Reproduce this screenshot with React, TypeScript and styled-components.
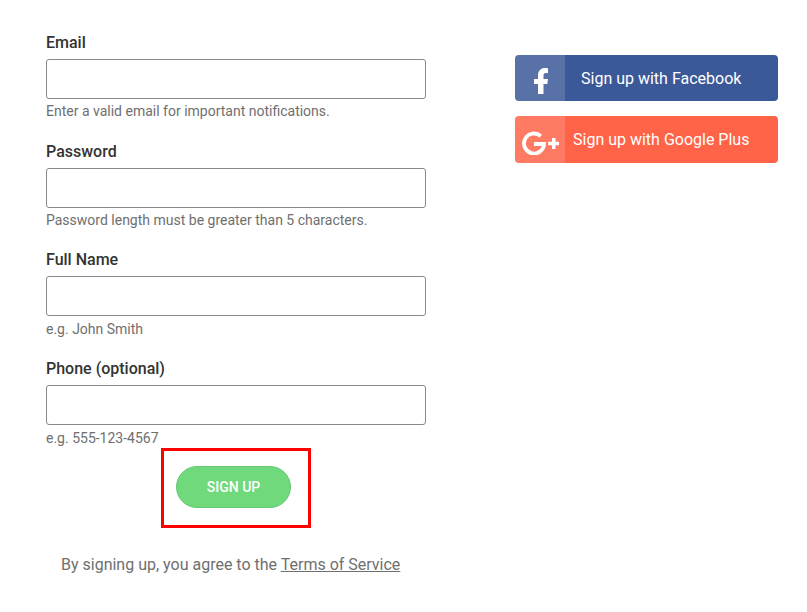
import React from "react";
import styled, { createGlobalStyle } from "styled-components";

const Global = createGlobalStyle`
  html, body { margin: 0; padding: 0; background: #fff; }
  body {
    font-family: Roboto, "Liberation Sans", sans-serif;
    overflow: hidden;
  }
`;

const Page = styled.div`
  display: flex;
  align-items: flex-start;
  width: 807px;
  height: 612px;
  padding: 32px 0 0 46px;
  box-sizing: border-box;
`;

const FormColumn = styled.form`
  display: flex;
  flex-direction: column;
  width: 380px;
  flex: none;
`;

const Field = styled.div`
  display: flex;
  flex-direction: column;
  height: 108.7px;
`;

const Label = styled.label`
  font-size: 16px;
  font-weight: 500;
  line-height: 20px;
  color: #333;
  padding-top: 1px;
  margin-bottom: 6px;
`;

const Input = styled.input`
  display: block;
  width: 100%;
  height: 40px;
  box-sizing: border-box;
  border: 1px solid #888;
  border-radius: 3px;
  background: #fff;
  outline: none;
`;

const Hint = styled.span`
  font-size: 14px;
  line-height: 20px;
  color: #6f6f6f;
  margin-top: 2.45px;
`;

const Highlight = styled.div`
  align-self: flex-start;
  margin: -18.8px 0 0 115px;
  width: 150px;
  height: 80px;
  box-sizing: border-box;
  border: 3px solid #f00;
  padding: 15px 0 0 12px;
`;

const SubmitButton = styled.button`
  display: block;
  width: 115px;
  height: 42px;
  border: 1px solid #66c975;
  border-radius: 21px;
  background: #6fd97c;
  color: #fff;
  font-family: inherit;
  font-size: 14px;
  font-weight: 500;
  padding: 0;
`;

const Terms = styled.p`
  margin: 27px 0 0 15px;
  font-size: 16px;
  line-height: 20px;
  color: #6f6f6f;
`;

const TermsLink = styled.a`
  color: #6f6f6f;
  text-decoration: underline;
`;

const SocialColumn = styled.div`
  display: flex;
  flex-direction: column;
  gap: 15px;
  width: 263px;
  margin: 23px 0 0 89px;
  flex: none;
`;

const SocialButton = styled.a<{ $bg: string; $h: number }>`
  display: flex;
  align-items: center;
  height: ${(p) => p.$h}px;
  background: ${(p) => p.$bg};
  border-radius: 4px;
  overflow: hidden;
  color: #fff;
`;

const SocialIcon = styled.span<{ $top: number }>`
  display: flex;
  align-items: center;
  justify-content: center;
  width: 50px;
  height: 100%;
  box-sizing: border-box;
  padding: ${(p) => p.$top}px 0 0 2px;
  flex: none;
  background: rgba(255, 255, 255, 0.15);
`;

const SocialLabel = styled.span<{ $left: number; $top: number }>`
  font-size: 16px;
  line-height: 20px;
  margin-left: ${(p) => p.$left}px;
  padding-top: ${(p) => p.$top}px;
`;

const FacebookGlyph = () => (
  <svg width="14" height="26" viewBox="0 0 14 26" fill="#fff">
    <path d="M4 26V16H0v-5h4V7.500C4 2.500 7 0 11 0c1.300 0 2.500.1 3 .2v4.800h-2c-2 0-2.500 1-2.500 2.500V11H14l-.7 5H9.500v10z" />
  </svg>
);

const GooglePlusGlyph = () => (
  <svg width="38" height="24" viewBox="0 0 38 24">
    <path d="M18.800 5.200A10 10 0 1 0 22 13H12" fill="none" stroke="#fff" strokeWidth="3.800" />
    <path d="M30 7h3.500v3.800h3.500v3.400h-3.500V18H30v-3.800h-3.800v-3.400H30z" fill="#fff" />
  </svg>
);

const fields = [
  { label: "Email", hint: "Enter a valid email for important notifications." },
  { label: "Password", hint: "Password length must be greater than 5 characters." },
  { label: "Full Name", hint: "e.g. John Smith" },
  { label: "Phone (optional)", hint: "e.g. 555-123-4567" },
];

export default function App() {
  return (
    <>
      <Global />
      <Page>
        <FormColumn>
          {fields.map((f) => (
            <Field key={f.label}>
              <Label>{f.label}</Label>
              <Input />
              <Hint>{f.hint}</Hint>
            </Field>
          ))}
          <Highlight>
            <SubmitButton type="button">SIGN UP</SubmitButton>
          </Highlight>
          <Terms>
            By signing up, you agree to the <TermsLink>Terms of Service</TermsLink>
          </Terms>
        </FormColumn>
        <SocialColumn>
          <SocialButton $bg="#3b5998" $h={46}>
            <SocialIcon $top={6}><FacebookGlyph /></SocialIcon>
            <SocialLabel $left={16} $top={1}>Sign up with Facebook</SocialLabel>
          </SocialButton>
          <SocialButton $bg="#ff6348" $h={47}>
            <SocialIcon $top={7}><GooglePlusGlyph /></SocialIcon>
            <SocialLabel $left={8} $top={0}>Sign up with Google Plus</SocialLabel>
          </SocialButton>
        </SocialColumn>
      </Page>
    </>
  );
}
